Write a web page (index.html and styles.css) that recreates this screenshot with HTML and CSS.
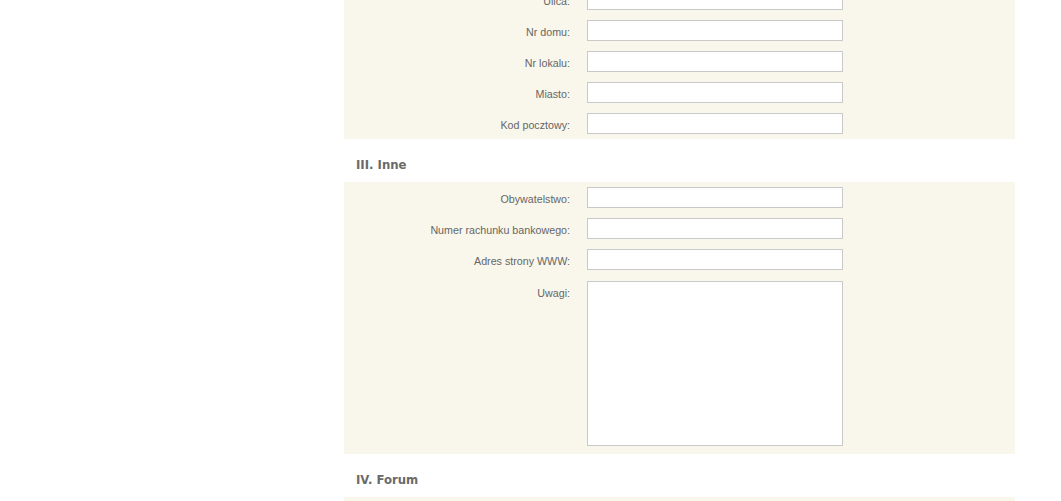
FILE: index.html
```html
<!DOCTYPE html>
<html lang="pl">
<head>
<meta charset="utf-8">
<title>Formularz</title>
<link rel="stylesheet" href="styles.css">
</head>
<body>
<div class="page">
  <div class="form">
    <div class="panel">
      <div class="row"><label class="lbl">Ulica:</label><input class="field" type="text"></div>
      <div class="row"><label class="lbl">Nr domu:</label><input class="field" type="text"></div>
      <div class="row"><label class="lbl">Nr lokalu:</label><input class="field" type="text"></div>
      <div class="row"><label class="lbl">Miasto:</label><input class="field" type="text"></div>
      <div class="row"><label class="lbl">Kod pocztowy:</label><input class="field" type="text"></div>
    </div>
    <h3 class="section">III. Inne</h3>
    <div class="panel panel-tall">
      <div class="row"><label class="lbl">Obywatelstwo:</label><input class="field" type="text"></div>
      <div class="row"><label class="lbl">Numer rachunku bankowego:</label><input class="field" type="text"></div>
      <div class="row"><label class="lbl">Adres strony WWW:</label><input class="field" type="text"></div>
      <div class="row row-area"><label class="lbl">Uwagi:</label><textarea class="area"></textarea></div>
    </div>
    <h3 class="section">IV. Forum</h3>
    <div class="panel panel-next"></div>
  </div>
</div>
</body>
</html>
```
FILE: styles.css
```css
html, body {
  margin: 0;
  padding: 0;
  background: #ffffff;
}
body {
  font-family: "Liberation Sans", Arial, sans-serif;
  overflow: hidden;
}
.page {
  padding-left: 344px;
  margin-top: -16px;
}
.form {
  width: 671px;
}
.panel {
  background: #f9f7eb;
  padding: 5px 0 5px 0;
  display: flex;
  flex-direction: column;
  gap: 10px;
}
.panel-tall {
  padding-bottom: 8px;
}
.panel-next {
  height: 40px;
}
.row {
  display: grid;
  grid-template-columns: 226px 256px;
  column-gap: 17px;
  align-items: start;
}
.row-area {
  margin-top: 1px;
}
.lbl {
  text-align: right;
  font-size: 10.7px;
  line-height: 13px;
  padding-top: 6px;
  color: #666666;
}
.field, .area {
  box-sizing: border-box;
  width: 256px;
  height: 21px;
  margin: 0;
  padding: 2px 3px;
  border: 1px solid #c9c9c9;
  background: #ffffff;
  font-family: "Liberation Sans", Arial, sans-serif;
  font-size: 11px;
  outline: none;
  display: block;
}
.area {
  height: 165px;
  resize: none;
}
.section {
  margin: 0;
  height: 43px;
  box-sizing: border-box;
  padding: 19px 0 0 12px;
  font-family: "DejaVu Sans", Verdana, sans-serif;
  font-size: 11.7px;
  line-height: 14px;
  font-weight: bold;
  color: #6a6a6a;
}
```
